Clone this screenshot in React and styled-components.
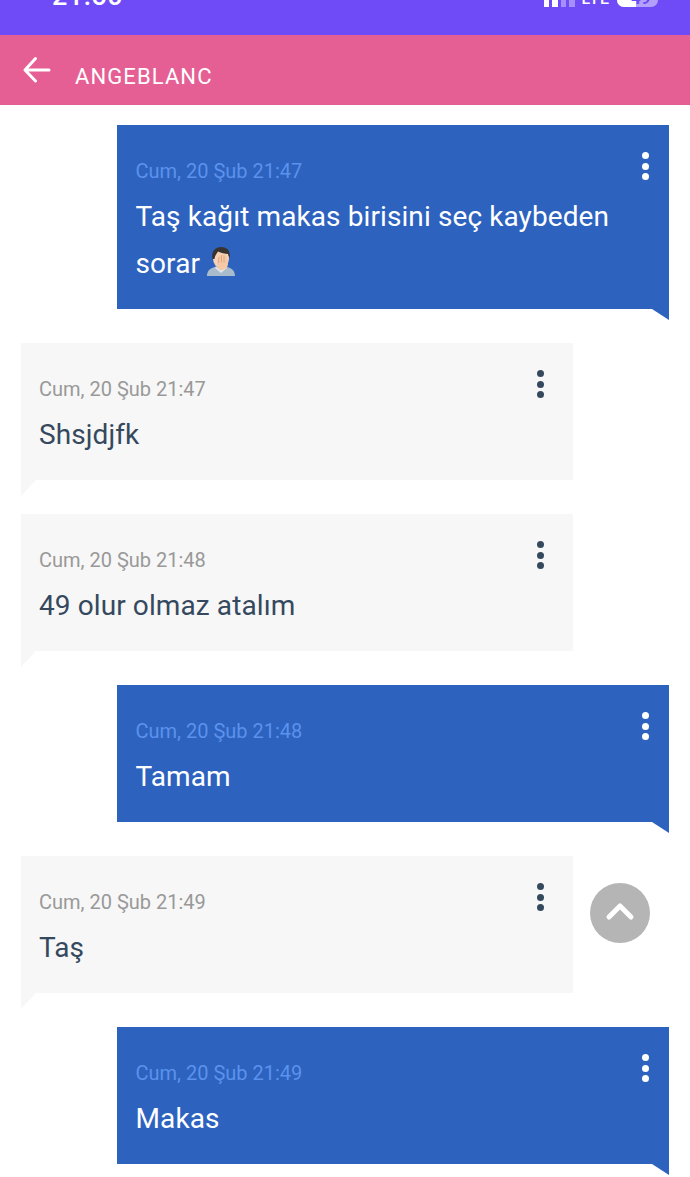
import React from 'react';
import styled, { createGlobalStyle } from 'styled-components';

const GlobalStyle = createGlobalStyle`
  html, body {
    margin: 0;
    padding: 0;
    background: #fff;
    overflow: hidden;
    font-family: Roboto, "Noto Sans", sans-serif;
  }
`;

const Page = styled.div`
  position: relative;
  width: 690px;
  height: 1177px;
  overflow: hidden;
  background: #fff;
`;

const StatusBar = styled.div`
  height: 35px;
  background: #6f4bf8;
  color: #fff;
  display: flex;
  justify-content: space-between;
  align-items: flex-end;
  padding: 0 32px 0 52px;
  overflow: hidden;
`;

const Clock = styled.span`
  font-size: 27px;
  line-height: 32px;
  font-weight: 500;
  letter-spacing: 0.5px;
  margin-bottom: 23px;
`;

const StatusIcons = styled.div`
  display: flex;
  align-items: flex-end;
  height: 40px;
  margin-bottom: 28px;
`;

const Signal = styled.div`
  display: flex;
  align-items: flex-end;
  gap: 3px;
  margin-right: 7px;
`;

const SignalBar = styled.i`
  width: 5.5px;
  height: 14px;
  background: ${(p) => (p.$dim ? '#a48ffb' : '#fff')};
`;

const Lte = styled.span`
  font-size: 16px;
  line-height: 16px;
  font-weight: 500;
  letter-spacing: 1px;
  margin-right: 7px;
`;

const Battery = styled.div`
  width: 41px;
  height: 20px;
  border-radius: 7px;
  overflow: hidden;
  background: #b3a0fb;
  display: flex;
  font-size: 17px;
  line-height: 23px;
  font-weight: 700;
  color: #6f4bf8;
`;

const BatteryFill = styled.div`
  width: 19px;
  background: #fff;
`;

const BatteryLevel = styled.span`
  margin-left: -5px;
`;

const Header = styled.header`
  height: 70px;
  box-sizing: border-box;
  background: #e55f95;
  color: #fff;
  display: flex;
  align-items: flex-start;
  padding: 20px 0 0 22px;
`;

const BackIcon = styled.svg`
  width: 30px;
  height: 30px;
  margin-right: 23px;
`;

const Title = styled.h1`
  margin: 10px 0 0;
  font-size: 22px;
  line-height: 24px;
  font-weight: 400;
  letter-spacing: 1.1px;
`;

const List = styled.main`
  display: flex;
  flex-direction: column;
  gap: 34px;
  padding: 20px 21px 0;
`;

const Bubble = styled.article`
  position: relative;
  width: 552px;
  box-sizing: border-box;
  align-self: ${(p) => (p.$mine ? 'flex-end' : 'flex-start')};
  padding: ${(p) => (p.$mine ? '27px 20.5px 22px 18.5px' : '27px 29px 22px 18px')};
  background: ${(p) => (p.$mine ? '#2d62bf' : '#f7f7f7')};
  color: ${(p) => (p.$mine ? '#fff' : '#35495e')};

  &::after {
    content: '';
    position: absolute;
    top: 100%;
    ${(p) => (p.$mine ? 'right: 0;' : 'left: 0;')}
    width: ${(p) => (p.$mine ? '17px' : '15px')};
    height: ${(p) => (p.$mine ? '11px' : '16px')};
    background: inherit;
    clip-path: ${(p) =>
      p.$mine
        ? 'polygon(0 0, 100% 0, 100% 100%)'
        : 'polygon(0 0, 100% 0, 0 100%)'};
  }
`;

const BubbleHead = styled.div`
  display: flex;
  justify-content: space-between;
  align-items: flex-start;
  height: 28px;
  margin-bottom: 13px;
`;

const Time = styled.time`
  margin-top: 8px;
  font-size: 20px;
  line-height: 22px;
  color: ${(p) => (p.$mine ? '#5b92ec' : '#999')};
`;

const Kebab = styled.div`
  display: flex;
  flex-direction: column;
  justify-content: space-between;
  height: 28px;
`;

const Dot = styled.i`
  width: 7px;
  height: 7px;
  border-radius: 50%;
  background: currentColor;
`;

const Text = styled.p`
  margin: 0;
  font-size: 28px;
  line-height: 47px;
  letter-spacing: 0.1px;
`;

const EmojiIcon = styled.svg`
  width: 30px;
  height: 30px;
  margin-left: -1px;
  vertical-align: -4px;
`;

const ScrollTop = styled.button`
  position: absolute;
  left: 590px;
  top: 883px;
  width: 60px;
  height: 60px;
  padding: 0;
  border: none;
  border-radius: 50%;
  background: #b5b5b5;
  display: flex;
  align-items: center;
  justify-content: center;
`;

const Facepalm = () => (
  <EmojiIcon viewBox="0 0 30 30">
    <path d="M1 29c0-5 3-8 8-9l6 2 6-2c5 1 8 4 8 9z" fill="#a9bccb" />
    <path d="M10 19l5 4 5-4 1 2-6 5-6-5z" fill="#dfe5ea" />
    <ellipse cx="15" cy="11.500" rx="8" ry="9.500" fill="#f5d3b8" />
    <path d="M6.500 12C5 5 9 0 15 0c6 0 10 4 8.500 11L22 7c-3 0-7-1-10-2.500-1 2-3 3.500-3.500 7.500z" fill="#39332f" />
    <path d="M13 8c1-1 2 0 3-1 1 0 2 0 2 1 1-1 3 0 3 2l1 7c0 3-3 6-6 6-4 0-5-3-5-6 0-3 1-7 2-9z" fill="#f7c8a6" />
    <path d="M15.500 8.500v7M18 8.500v7M13 10l-.5 6" stroke="#d79f7e" strokeWidth="0.8" fill="none" />
  </EmojiIcon>
);

const messages = [
  { mine: true, time: 'Cum, 20 Şub 21:47', text: 'Taş kağıt makas birisini seç kaybeden sorar ', emoji: true },
  { mine: false, time: 'Cum, 20 Şub 21:47', text: 'Shsjdjfk' },
  { mine: false, time: 'Cum, 20 Şub 21:48', text: '49 olur olmaz atalım' },
  { mine: true, time: 'Cum, 20 Şub 21:48', text: 'Tamam' },
  { mine: false, time: 'Cum, 20 Şub 21:49', text: 'Taş' },
  { mine: true, time: 'Cum, 20 Şub 21:49', text: 'Makas' },
];

export default function App() {
  return (
    <Page>
      <GlobalStyle />
      <StatusBar>
        <Clock>21:50</Clock>
        <StatusIcons>
          <Signal>
            <SignalBar />
            <SignalBar />
            <SignalBar $dim />
            <SignalBar $dim />
          </Signal>
          <Lte>LTE</Lte>
          <Battery>
            <BatteryFill />
            <BatteryLevel>49</BatteryLevel>
          </Battery>
        </StatusIcons>
      </StatusBar>
      <Header>
        <BackIcon viewBox="0 0 30 30" fill="none" stroke="#fff" strokeWidth="3" strokeLinecap="round" strokeLinejoin="round">
          <path d="M3 15h24M13.500 3.500L3 15l10.500 11" />
        </BackIcon>
        <Title>ANGEBLANC</Title>
      </Header>
      <List>
        {messages.map((m, i) => (
          <Bubble key={i} $mine={m.mine}>
            <BubbleHead>
              <Time $mine={m.mine}>{m.time}</Time>
              <Kebab>
                <Dot />
                <Dot />
                <Dot />
              </Kebab>
            </BubbleHead>
            <Text>
              {m.text}
              {m.emoji && <Facepalm />}
            </Text>
          </Bubble>
        ))}
      </List>
      <ScrollTop aria-label="Yukarı">
        <svg width="32" height="22" viewBox="0 0 32 22" fill="none" stroke="#fff" strokeWidth="5" strokeLinecap="round" strokeLinejoin="round">
          <path d="M5 15L16 4l11 11" />
        </svg>
      </ScrollTop>
    </Page>
  );
}
